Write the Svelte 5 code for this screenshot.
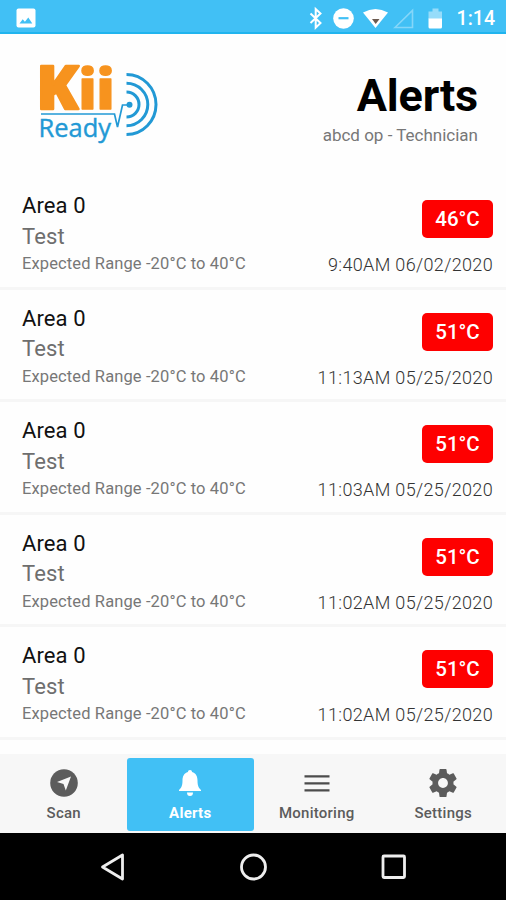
<script lang="ts">
	type Alert = { area: string; sensor: string; range: string; temp: string; time: string };

	const range = 'Expected Range -20°C to 40°C';

	const alerts: Alert[] = [
		{ area: 'Area 0', sensor: 'Test', range, temp: '46°C', time: '9:40AM 06/02/2020' },
		{ area: 'Area 0', sensor: 'Test', range, temp: '51°C', time: '11:13AM 05/25/2020' },
		{ area: 'Area 0', sensor: 'Test', range, temp: '51°C', time: '11:03AM 05/25/2020' },
		{ area: 'Area 0', sensor: 'Test', range, temp: '51°C', time: '11:02AM 05/25/2020' },
		{ area: 'Area 0', sensor: 'Test', range, temp: '51°C', time: '11:02AM 05/25/2020' }
	];

	const tabs = ['Scan', 'Alerts', 'Monitoring', 'Settings'];
	let active = $state('Alerts');
</script>

<div class="screen">
	<div class="status-bar">
		<svg class="photo" viewBox="0 0 20 20" width="20" height="20" aria-hidden="true">
			<rect x="0.5" y="0.5" width="19" height="19" rx="2" fill="#fff" />
			<path d="M3.5 15.5l3.2-4.2 2.2 2.5 3.4-4.3 4 6z" fill="#41c0f5" />
		</svg>
		<svg class="status-icons" viewBox="0 0 140 28" width="140" height="28" aria-hidden="true">
			<path d="M3.500 9.500l10 9.500-4.800 4.600V5l4.800 4.500-10 9.500" fill="none" stroke="#fff" stroke-width="2" />
			<circle cx="36.500" cy="14.500" r="10.300" fill="#fff" />
			<path d="M31.500 14.200h10" stroke="#41c0f5" stroke-width="2.200" />
			<path d="M56 8.500q12.500-7 25 0L68.500 24z" fill="#fff" />
			<path d="M65 15h7.500L68.700 20z" fill="#6b5a50" />
			<path d="M88 23.500L105.500 6.500v17z" fill="none" stroke="#85d6f9" stroke-width="1.600" />
			<path d="M121.500 15V7.500h4V4.500h6v3h3.500V15z" fill="#96dcfa" />
			<path d="M121.500 14.500H135V23q0 1.500-1.500 1.500H123q-1.500 0-1.500-1.500z" fill="#fff" />
		</svg>
		<span class="clock">1:14</span>
	</div>

	<header>
		<svg class="logo" viewBox="0 0 124 84" width="124" height="84" role="img" aria-label="Kii Ready">
			<g class="kii">
				<text class="big" x="-3.500" y="49" textLength="42" lengthAdjust="spacingAndGlyphs">K</text>
				<text x="38.500" y="49">i</text>
				<text x="56.500" y="49">i</text>
			</g>
			<text class="ready" x="-1.500" y="77" textLength="72.500" lengthAdjust="spacingAndGlyphs">Ready</text>
			<g class="waves">
				<path d="M1 54H74.500L77.500 67 82.500 45H89" stroke-width="1.700" />
				<path d="M86.500 32a12.500 12.500 0 0 1 0 25" stroke-width="3" />
				<path d="M86.500 23.200a21.300 21.300 0 0 1 0 42.600" stroke-width="3" />
				<path d="M86.500 14.500a29.500 30 0 0 1 0 60" stroke-width="3" />
			</g>
			<circle cx="89.500" cy="44.700" r="3" fill="#2299d5" />
		</svg>
		<div class="heading">
			<h1>Alerts</h1>
			<p>abcd op - Technician</p>
		</div>
	</header>

	<main>
		{#each alerts as alert}
			<article>
				<div class="info">
					<h2>{alert.area}</h2>
					<p class="sensor">{alert.sensor}</p>
					<p class="range">{alert.range}</p>
				</div>
				<div class="reading">
					<span class="temp">{alert.temp}</span>
					<time>{alert.time}</time>
				</div>
			</article>
		{/each}
	</main>

	<nav class="tabs">
		{#each tabs as tab}
			<button class:active={tab === active} onclick={() => (active = tab)}>
				<svg viewBox="0 0 30 30" width="30" height="30" aria-hidden="true">
					{#if tab === 'Scan'}
						<circle cx="15" cy="15" r="13.800" fill="currentColor" />
						<path d="M22 8.500L16.800 22.500 14.500 16 8 14z" fill="#f7f7f7" />
					{:else if tab === 'Alerts'}
						<path d="M15 2c-1.300 0-2 .9-2 2-4 1-5.500 4.500-5.500 8.500 0 6-1.500 7.500-3.500 9.500v1h22v-1c-2-2-3.500-3.500-3.500-9.500 0-4-1.500-7.500-5.500-8.500 0-1.100-.7-2-2-2zM12 24.500a3 3.600 0 0 0 6 0z" fill="currentColor" />
					{:else if tab === 'Monitoring'}
						<path d="M2.500 8.300h25M2.500 15.300h25M2.500 22.300h25" stroke="#4c4c4c" stroke-width="2.200" />
					{:else}
						<path transform="translate(-1.800 -1.800) scale(1.400)" d="M19.430 12.980c.04-.32.07-.64.07-.98s-.03-.66-.07-.98l2.110-1.650c.19-.15.24-.42.12-.64l-2-3.460c-.12-.22-.39-.3-.61-.22l-2.490 1c-.52-.4-1.080-.73-1.690-.98l-.38-2.650C14.460 2.180 14.250 2 14 2h-4c-.25 0-.46.18-.49.42l-.38 2.650c-.61.25-1.170.59-1.690.98l-2.490-1c-.23-.09-.49 0-.61.22l-2 3.460c-.13.22-.07.49.12.64l2.110 1.650c-.04.32-.07.65-.07.98s.03.66.07.98l-2.110 1.650c-.19.15-.24.42-.12.64l2 3.460c.12.22.39.3.61.22l2.490-1c.52.4 1.080.73 1.690.98l.38 2.650c.03.24.24.42.49.42h4c.25 0 .46-.18.49-.42l.38-2.650c.61-.25 1.170-.59 1.690-.98l2.490 1c.23.09.49 0 .61-.22l2-3.460c.12-.22.07-.49-.12-.64l-2.110-1.650zM12 15.500c-1.930 0-3.500-1.570-3.500-3.500s1.570-3.500 3.500-3.500 3.500 1.570 3.500 3.500-1.570 3.500-3.500 3.500z" fill="currentColor" />
					{/if}
				</svg>
				<span>{tab}</span>
			</button>
		{/each}
	</nav>

	<div class="system-nav">
		<svg viewBox="0 0 30 30" width="30" height="30" aria-label="Back">
			<path d="M4.500 15L24.500 3v24z" />
		</svg>
		<svg viewBox="0 0 30 30" width="30" height="30" aria-label="Home">
			<circle cx="14.500" cy="15" r="12" />
		</svg>
		<svg viewBox="0 0 30 30" width="30" height="30" aria-label="Recent">
			<rect x="4" y="4" width="21.500" height="21.500" rx="1" />
		</svg>
	</div>
</div>

<style>
	:global(body) {
		margin: 0;
		background: #fff;
	}

	.screen {
		display: flex;
		flex-direction: column;
		width: 506px;
		height: 900px;
		overflow: hidden;
		background: #fefefe;
		font-family: Roboto, sans-serif;
	}

	.status-bar {
		box-sizing: border-box;
		display: flex;
		align-items: center;
		height: 34px;
		flex: none;
		padding: 0 11px 0 16px;
		background: #41c0f5;
		border-bottom: 2px solid #20b4ee;
		color: #fff;
	}

	.status-icons {
		margin: 3px 0 0 auto;
	}

	.photo {
		margin-top: 3px;
	}

	.clock {
		margin: 4px 0 0 10px;
		font-size: 19.5px;
		font-weight: 500;
	}

	header {
		box-sizing: border-box;
		display: flex;
		justify-content: space-between;
		height: 143px;
		flex: none;
		padding: 26px 28px 0 40px;
	}

	.logo {
		overflow: visible;
	}

	.kii {
		font: 800 55.5px 'Open Sans', sans-serif;
		fill: #f7931e;
		stroke: #f7931e;
		stroke-width: 1.4;
		stroke-linejoin: round;
	}

	.kii .big {
		font-size: 59.5px;
		stroke-width: 2.4;
	}

	.ready {
		font: 400 25.5px 'Open Sans', sans-serif;
		fill: #2299d5;
		stroke: #2299d5;
		stroke-width: 0.4;
	}

	.waves {
		fill: none;
		stroke: #2299d5;
	}

	.heading {
		text-align: right;
	}

	h1 {
		margin: 10px 0 0;
		font-size: 45px;
		line-height: 52px;
		font-weight: 700;
		letter-spacing: -0.2px;
		color: #000;
	}

	.heading p {
		margin: 3px 0 0;
		font-size: 17px;
		line-height: 20px;
		color: #777;
	}

	main {
		flex: 1;
		min-height: 0;
	}

	article {
		box-sizing: border-box;
		display: flex;
		justify-content: space-between;
		height: 112.5px;
		padding: 14px 13px 0 22px;
		border-bottom: 3px solid #f6f6f6;
	}

	h2,
	.sensor {
		margin: 0;
		font-size: 22px;
		line-height: 30.5px;
		font-weight: 400;
		letter-spacing: 0.1px;
		color: #111;
	}

	.sensor {
		color: #6e6e6e;
	}

	.range {
		margin: 0;
		font-size: 16.5px;
		line-height: 23px;
		letter-spacing: 0.12px;
		color: #777;
	}

	.reading {
		display: flex;
		flex-direction: column;
		align-items: flex-end;
	}

	.temp {
		box-sizing: border-box;
		width: 71px;
		height: 38px;
		margin-top: 9px;
		border-radius: 5px;
		background: #fe0000;
		color: #fff;
		font-size: 20.5px;
		font-weight: 500;
		line-height: 39px;
		text-align: center;
	}

	time {
		margin-top: 16px;
		font-size: 18px;
		font-weight: 300;
		line-height: 22px;
		letter-spacing: 0.35px;
		color: #333;
	}

	.tabs {
		box-sizing: border-box;
		display: grid;
		grid-template-columns: repeat(4, 126.5px);
		height: 79px;
		flex: none;
		padding: 4px 0 2px 0.5px;
		background: #f7f7f7;
	}

	button {
		display: flex;
		flex-direction: column;
		align-items: center;
		padding: 10px 0 0;
		border: 0;
		border-radius: 3px;
		background: none;
		color: #5c5c5c;
		font: 500 15px Roboto, sans-serif;
		letter-spacing: 0.25px;
	}

	button span {
		margin-top: 5px;
		line-height: 20px;
	}

	button.active {
		background: #41c0f5;
		color: #fff;
		font-weight: 700;
	}

	.system-nav {
		display: flex;
		justify-content: center;
		align-items: center;
		gap: 110.5px;
		height: 67px;
		flex: none;
		padding-left: 1px;
		background: #000;
	}

	.system-nav svg {
		fill: none;
		stroke: #eee;
		stroke-width: 2.8;
		stroke-linejoin: round;
	}
</style>
